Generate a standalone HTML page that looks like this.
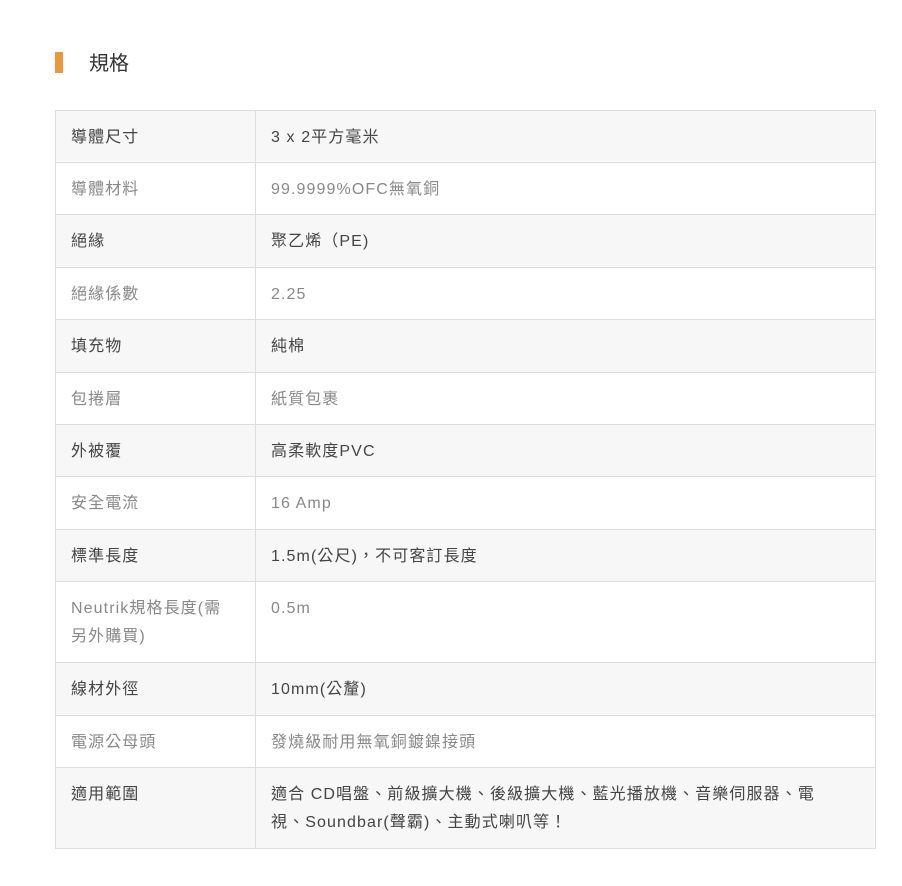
<!DOCTYPE html>
<html><head><meta charset="utf-8"><style>
body{margin:0;background:#fff;font-family:"Liberation Sans","Noto Sans CJK TC",sans-serif;}
.h{position:absolute;left:55px;top:52px;height:21px;border-left:8px solid #f0963a;}
.h span{position:absolute;left:26px;top:0px;font-size:20px;color:#333;white-space:nowrap;line-height:24px;}
table{position:absolute;left:55px;top:110px;width:821px;border-collapse:collapse;font-size:16px;letter-spacing:1.1px;}
td{border:1px solid #ddd;padding:13px 40px 0 15px;line-height:28px;vertical-align:top;height:52px;box-sizing:border-box;}
td:first-child{width:200px;padding-right:28px;}
tr:nth-child(odd){background:#f7f7f7;color:#444;}
tr:nth-child(even){background:#fff;color:#888;}
tr.b td{height:53px;}
tr.t td{height:81px;}
</style></head><body>
<div class="h"><span>規格</span></div>
<table>
<tr><td>導體尺寸</td><td>3 x 2平方毫米</td></tr>
<tr><td>導體材料</td><td>99.9999%OFC無氧銅</td></tr>
<tr class="b"><td>絕緣</td><td>聚乙烯（PE)</td></tr>
<tr><td>絕緣係數</td><td>2.25</td></tr>
<tr class="b"><td>填充物</td><td>純棉</td></tr>
<tr><td>包捲層</td><td>紙質包裹</td></tr>
<tr><td>外被覆</td><td>高柔軟度PVC</td></tr>
<tr class="b"><td>安全電流</td><td>16 Amp</td></tr>
<tr><td>標準長度</td><td>1.5m(公尺)，不可客訂長度</td></tr>
<tr class="t" style="background:#fff;color:#888"><td>Neutrik規格長度(需另外購買)</td><td>0.5m</td></tr>
<tr class="b" style="background:#f7f7f7;color:#444"><td>線材外徑</td><td>10mm(公釐)</td></tr>
<tr style="background:#fff;color:#888"><td>電源公母頭</td><td>發燒級耐用無氧銅鍍鎳接頭</td></tr>
<tr class="t" style="background:#f7f7f7;color:#444"><td>適用範圍</td><td>適合 CD唱盤、前級擴大機、後級擴大機、藍光播放機、音樂伺服器、電視、Soundbar(聲霸)、主動式喇叭等！</td></tr>
</table>
</body></html>
